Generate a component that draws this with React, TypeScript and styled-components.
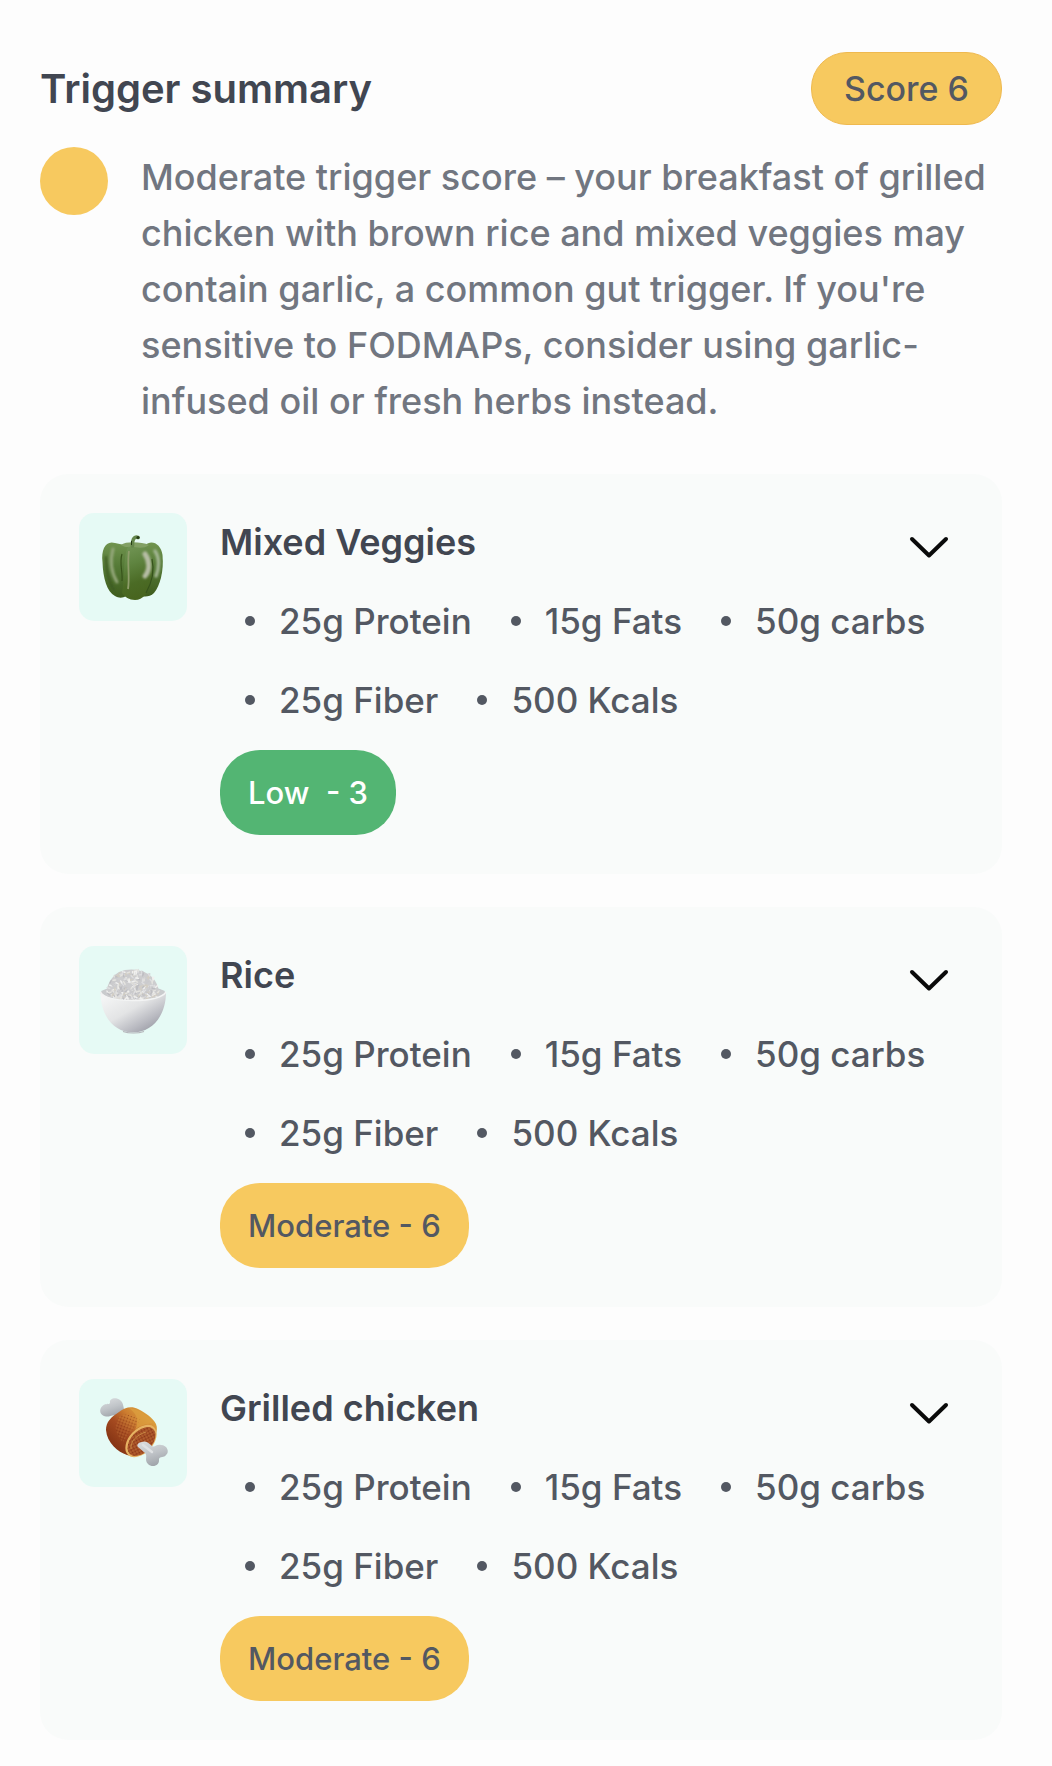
import React from "react";
import styled, { createGlobalStyle } from "styled-components";

const colors = {
  page: "#fdfdfd",
  card: "#f9fbfa",
  tile: "#e6faf5",
  heading: "#414651",
  body: "#717680",
  detail: "#535862",
  amber: "#f7c95f",
  amberEdge: "#efb94f",
  green: "#53b573",
};

const GlobalStyle = createGlobalStyle`
  *, *::before, *::after { box-sizing: border-box; }
  body {
    margin: 0;
    background: ${colors.page};
    font-family: Inter, "Open Sans", sans-serif;
    font-weight: 500;
  }
`;

const Page = styled.main`
  padding: 52px 50px 26px 40px;
`;

const Header = styled.header`
  display: flex;
  align-items: center;
  justify-content: space-between;
  gap: 24px;
`;

const PageTitle = styled.h1`
  margin: 0;
  color: ${colors.heading};
  font-size: 40px;
  line-height: 55px;
  font-weight: 600;
`;

const ScorePill = styled.span`
  flex: none;
  padding: 8px 32px;
  border: 1px solid ${colors.amberEdge};
  border-radius: 36px;
  background: ${colors.amber};
  color: ${colors.detail};
  font-size: 34px;
  line-height: 55px;
`;

const Summary = styled.section`
  display: flex;
  align-items: flex-start;
  gap: 33px;
  margin-top: 22px;
`;

const LevelDot = styled.span`
  flex: none;
  width: 68px;
  height: 68px;
  border-radius: 50%;
  background: ${colors.amber};
`;

const SummaryText = styled.p`
  margin: 0;
  padding-top: 2px;
  color: ${colors.body};
  font-size: 36px;
  line-height: 56px;
`;

const CardList = styled.section`
  display: grid;
  gap: 33px;
  margin-top: 45px;
`;

const Card = styled.article`
  display: flex;
  align-items: flex-start;
  gap: 33px;
  padding: 39px;
  border-radius: 28px;
  background: ${colors.card};
`;

const Tile = styled.div`
  flex: none;
  width: 108px;
  height: 108px;
  border-radius: 15px;
  background: ${colors.tile};

  svg {
    display: block;
    width: 100%;
    height: 100%;
  }
`;

const CardBody = styled.div`
  flex: 1;
  min-width: 0;
  display: flex;
  flex-direction: column;
  align-items: flex-start;
  gap: 22px;
`;

const CardHead = styled.div`
  align-self: stretch;
  display: flex;
  justify-content: space-between;
`;

const CardTitle = styled.h2`
  margin: 0;
  color: ${colors.heading};
  font-size: 36px;
  line-height: 58px;
  font-weight: 600;
`;

const ExpandButton = styled.button`
  flex: none;
  width: 69px;
  height: 58px;
  padding: 0;
  border: 0;
  background: none;
  color: #0a0a0a;
  cursor: pointer;

  svg {
    display: block;
  }
`;

const Stats = styled.ul`
  display: flex;
  flex-wrap: wrap;
  gap: 23px 14px;
  margin: 0;
  padding: 0;
  list-style: none;
`;

const Stat = styled.li`
  display: flex;
  align-items: center;
  gap: 24px;
  padding-left: 25px;
  color: ${colors.detail};
  font-size: 35px;
  line-height: 56px;

  &::before {
    content: "";
    width: 10px;
    height: 10px;
    border-radius: 50%;
    background: currentColor;
  }
`;

const LevelPill = styled.span<{ $level: Level }>`
  padding: 20px 28px;
  border-radius: 40px;
  background: ${(p) => (p.$level === "Low" ? colors.green : colors.amber)};
  color: ${(p) => (p.$level === "Low" ? "#ffffff" : colors.detail)};
  font-size: 31px;
  line-height: 45px;
  white-space: pre;
`;

type Level = "Low" | "Moderate";

function Chevron() {
  return (
    <svg width="69" height="58" viewBox="0 0 69 58" fill="none" aria-hidden="true">
      <path
        d="M18 26 35 42.500 52 26"
        stroke="currentColor"
        strokeWidth="4"
        strokeLinecap="round"
        strokeLinejoin="round"
      />
    </svg>
  );
}

function PepperIcon() {
  return (
    <svg viewBox="4 8 108 108" aria-hidden="true">
      <defs>
        <linearGradient id="pepper-side" x1="0" y1="0" x2="0" y2="1">
          <stop offset="0" stopColor="#71944f" />
          <stop offset="0.45" stopColor="#547936" />
          <stop offset="1" stopColor="#3f5c1d" />
        </linearGradient>
        <linearGradient id="pepper-front" x1="0" y1="0" x2="0.2" y2="1">
          <stop offset="0" stopColor="#76995a" />
          <stop offset="0.4" stopColor="#5f8440" />
          <stop offset="0.75" stopColor="#4b6b25" />
          <stop offset="1" stopColor="#48651f" />
        </linearGradient>
        <filter id="pepper-soft" x="-50%" y="-20%" width="200%" height="140%">
          <feGaussianBlur stdDeviation="1.1" />
        </filter>
      </defs>
      <path d="M40 38C31 35 26 44 27.500 57C28 73 32 87 40 91C44 93.500 48 93 51 91L58 60L54 41Z" fill="url(#pepper-side)" />
      <path d="M70 40C77 34 86 39 87.500 50C89 66 85 81 79 88C75 92 70 92 66 91L63 58Z" fill="url(#pepper-side)" />
      <path d="M53 42C58 37 67 38 72 43C78 51 79 66 75 80C73 88 68 95 60 95C54 95 50 92 47 88C50 73 48 51 53 42Z" fill="url(#pepper-front)" />
      <path d="M46 40C51 36 67 37 74 40C69 44 61 43 57 41C53 43 49 42 46 40Z" fill="#82a064" />
      <g fill="none" strokeLinecap="round" filter="url(#pepper-soft)">
        <path d="M38 44C35 55 36 67 42 77" stroke="#94a77a" strokeWidth="3" />
        <path d="M70 49C75 56 75 65 70 71" stroke="#b6bda4" strokeWidth="5" />
        <path d="M80 46C85 53 84 64 81 71" stroke="#a3b693" strokeWidth="3.500" />
        <path d="M31 52C31 66 34 78 39 85" stroke="#3c5920" strokeWidth="2" />
      </g>
      <path d="M54 46C52 58 55 72 53 84" stroke="#8f9d6b" strokeWidth="1.800" fill="none" />
      <path d="M47 49C44 58 48 67 47 76" stroke="#38541b" strokeWidth="1.200" fill="none" />
      <path d="M77 54C80 67 76 79 71 88" stroke="#36521c" strokeWidth="1.200" fill="none" />
      <path d="M57.500 41C57 35 59 31 63 32.500" stroke="#66874c" strokeWidth="3.600" strokeLinecap="round" fill="none" />
      <circle cx="63" cy="32.500" r="1.600" fill="#263d16" />
      <path d="M56.500 36V40" stroke="#263d16" strokeWidth="1" />
    </svg>
  );
}

const grainTones = ["#f0f0ef", "#cbcbcd", "#e4e3df", "#bdbdc1", "#dedee0", "#d3cec3"];

/* Repeatable scatter, so that the heap looks the same on each render. */
const scatter = (n: number) => {
  const v = Math.sin(n * 127.1 + 31.7) * 43758.5453;
  return v - Math.floor(v);
};

const grains = Array.from({ length: 340 }, (_, i) => {
  const angle = scatter(i) * Math.PI * 2;
  const reach = Math.sqrt(scatter(i + 1000));
  return {
    x: 58 + Math.cos(angle) * reach * 26,
    y: 52 + Math.sin(angle) * reach * (Math.sin(angle) < 0 ? 22 : 8),
    tilt: scatter(i + 2000) * 180,
    tone: grainTones[Math.floor(scatter(i + 3000) * grainTones.length)],
  };
});

function RiceIcon() {
  return (
    <svg viewBox="4 6 108 108" aria-hidden="true">
      <defs>
        <linearGradient id="bowl" x1="0.1" y1="0.1" x2="0.85" y2="0.9">
          <stop offset="0" stopColor="#f4f5f5" />
          <stop offset="0.45" stopColor="#e3e4e5" />
          <stop offset="0.78" stopColor="#b9bac1" />
          <stop offset="1" stopColor="#9b9ca6" />
        </linearGradient>
      </defs>
      <ellipse cx="58" cy="53" rx="32.500" ry="7" fill="#c9cbcd" />
      <path d="M31 57C31 45 36 37 44 32C53 28 65 29 73 34C81 39 84 47 85 57Z" fill="#cdcdcf" />
      {grains.map((g, i) => (
        <ellipse
          key={i}
          cx={g.x}
          cy={g.y}
          rx="2.200"
          ry="0.800"
          fill={g.tone}
          transform={`rotate(${g.tilt} ${g.x} ${g.y})`}
        />
      ))}
      <path d="M25.500 52C25.500 76 39 92.500 58 92.500C77 92.500 91 76 91 52C87 58 74 60.500 58 60.500C42 60.500 29 58 25.500 52Z" fill="url(#bowl)" />
      <path d="M25.500 52C29 58 42 60.500 58 60.500C74 60.500 87 58 91 52" stroke="#f3f4f4" strokeWidth="1.400" fill="none" />
      <path d="M48 91.500C54 93.500 63 93.500 69 91.500" stroke="#b4b5ba" strokeWidth="1.200" fill="none" />
    </svg>
  );
}

function ChickenIcon() {
  return (
    <svg viewBox="4 8 108 108" aria-hidden="true">
      <defs>
        <linearGradient id="bone" x1="0.2" y1="0" x2="0.6" y2="1">
          <stop offset="0" stopColor="#d9dcde" />
          <stop offset="0.5" stopColor="#c0c4c8" />
          <stop offset="1" stopColor="#9ea2a8" />
        </linearGradient>
        <linearGradient id="roast" x1="0.85" y1="0.1" x2="0.15" y2="0.75">
          <stop offset="0" stopColor="#dfa541" />
          <stop offset="0.35" stopColor="#cc7d30" />
          <stop offset="0.65" stopColor="#a54a20" />
          <stop offset="1" stopColor="#883615" />
        </linearGradient>
        <pattern id="crisp" width="3" height="3" patternUnits="userSpaceOnUse" patternTransform="rotate(20)">
          <circle cx="1" cy="1" r="0.600" fill="#dba050" />
          <circle cx="2.400" cy="2.400" r="0.500" fill="#7e2f14" />
        </pattern>
      </defs>
      <path d="M43 46C38 42 36 46 31 45.500C25 45 23 38 28 34.500C31 32 34 34 35 32C34 27 41 26 45 29C49 32 48 37 50 41Z" fill="url(#bone)" />
      <path d="M44 41C50 36 57 35 63 38C71 42 78 47 81 53C84 60 79 68 72 76C66 83 59 86 52 84C43 81 32 72 31 59C31 51 36 46 44 41Z" fill="url(#roast)" />
      <path d="M44 46C51 41 60 44 66 49L58 58C53 63 51 67 48 71C42 66 37 53 44 46Z" fill="url(#crisp)" opacity="0.800" />
      <path d="M54 37C64 38 73 45 78 52C70 53 64 55 60 59C65 49 61 42 54 37Z" fill="#dda03e" opacity="0.700" />
      <ellipse cx="66" cy="70" rx="12" ry="19" transform="rotate(43 66 70)" fill="#e6b262" />
      <ellipse cx="66.500" cy="70.500" rx="10.500" ry="17" transform="rotate(43 66.500 70.500)" fill="#a04822" />
      <ellipse cx="66.500" cy="70.500" rx="10.500" ry="17" transform="rotate(43 66.500 70.500)" fill="url(#crisp)" />
      <path d="M56 78C55 70 62 64 71 61" stroke="#c98a45" strokeWidth="1" fill="none" />
      <path d="M67 71C71 69 75 73 77 75C80 77 81 73 86 74C92 74 95 81 91 84C89 87 85 85 84 88C85 95 77 97 73 93C69 89 73 85 70 82L63 76C61 74 64 71 67 71Z" fill="url(#bone)" />
      <path d="M68 74L77 81" stroke="#dfe2e4" strokeWidth="2.500" strokeLinecap="round" />
    </svg>
  );
}

const stats = ["25g Protein", "15g Fats", "50g carbs", "25g Fiber", "500 Kcals"];

interface Food {
  name: string;
  icon: React.ReactNode;
  level: Level;
  label: string;
}

const foods: Food[] = [
  { name: "Mixed Veggies", icon: <PepperIcon />, level: "Low", label: "Low  - 3" },
  { name: "Rice", icon: <RiceIcon />, level: "Moderate", label: "Moderate - 6" },
  { name: "Grilled chicken", icon: <ChickenIcon />, level: "Moderate", label: "Moderate - 6" },
];

function FoodCard({ food }: { food: Food }) {
  return (
    <Card>
      <Tile>{food.icon}</Tile>
      <CardBody>
        <CardHead>
          <CardTitle>{food.name}</CardTitle>
          <ExpandButton type="button" aria-label={`Show details for ${food.name}`}>
            <Chevron />
          </ExpandButton>
        </CardHead>
        <Stats>
          {stats.map((stat) => (
            <Stat key={stat}>{stat}</Stat>
          ))}
        </Stats>
        <LevelPill $level={food.level}>{food.label}</LevelPill>
      </CardBody>
    </Card>
  );
}

export default function App() {
  return (
    <>
      <GlobalStyle />
      <Page>
        <Header>
          <PageTitle>Trigger summary</PageTitle>
          <ScorePill>Score 6</ScorePill>
        </Header>
        <Summary>
          <LevelDot />
          <SummaryText>
            Moderate trigger score – your breakfast of grilled chicken with brown rice and mixed
            veggies may contain garlic, a common gut trigger. If you're sensitive to FODMAPs,
            consider using garlic-infused oil or fresh herbs instead.
          </SummaryText>
        </Summary>
        <CardList>
          {foods.map((food) => (
            <FoodCard key={food.name} food={food} />
          ))}
        </CardList>
      </Page>
    </>
  );
}
